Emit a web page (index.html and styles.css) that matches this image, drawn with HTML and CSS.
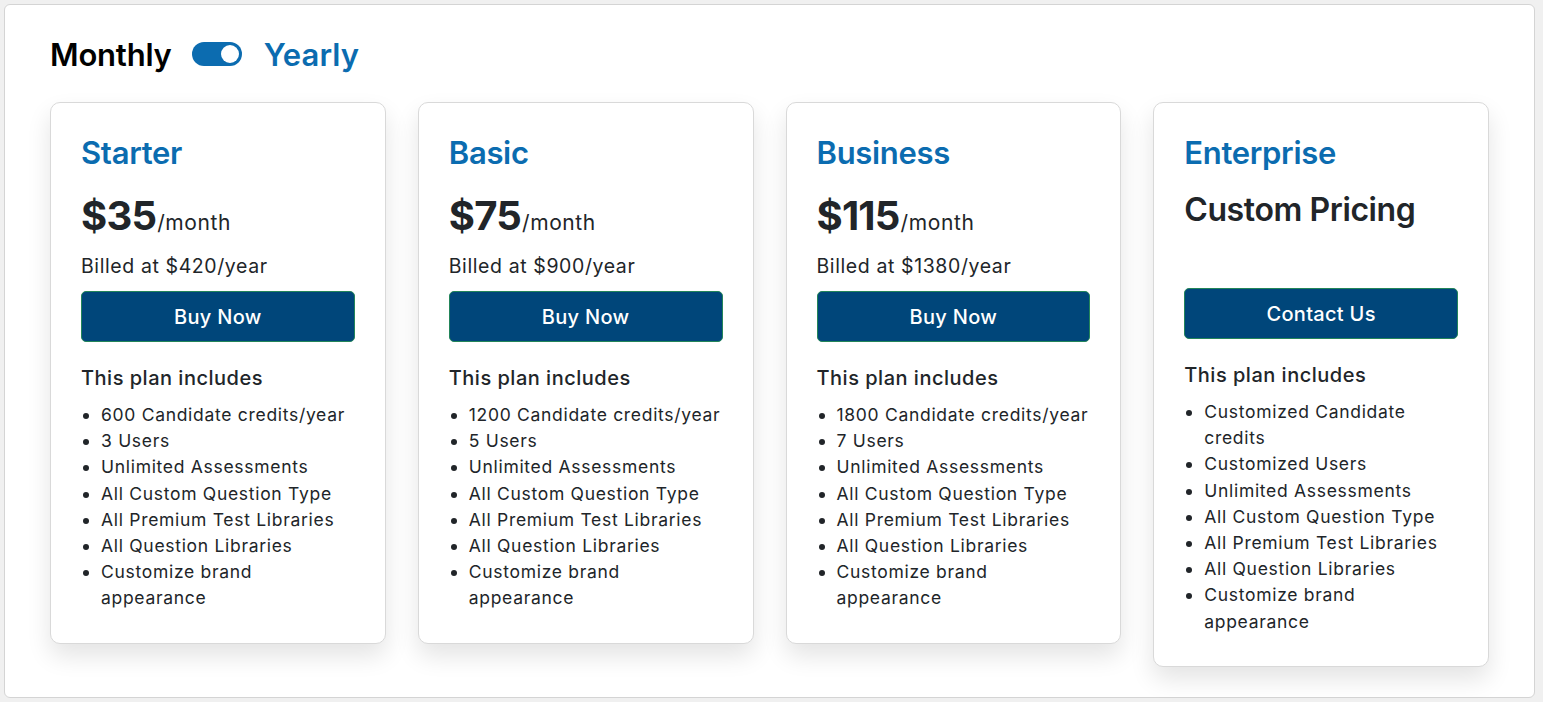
FILE: index.html
```html
<!DOCTYPE html>
<html lang="en">
<head>
<meta charset="utf-8">
<title>Pricing</title>
<link rel="stylesheet" href="styles.css">
</head>
<body>
<div class="page">
  <section class="panel">
    <div class="billing-toggle">
      <span class="toggle-label">Monthly</span>
      <span class="switch"><span class="knob"></span></span>
      <span class="toggle-label active">Yearly</span>
    </div>
    <div class="plans">
      <article class="plan">
        <h2 class="plan-name">Starter</h2>
        <div class="price"><span class="amount">$35</span><span class="per">/month</span></div>
        <p class="billed">Billed at $420/year</p>
        <button class="cta">Buy Now</button>
        <h3 class="includes">This plan includes</h3>
        <ul class="features">
          <li>600 Candidate credits/year</li>
          <li>3 Users</li>
          <li>Unlimited Assessments</li>
          <li>All Custom Question Type</li>
          <li>All Premium Test Libraries</li>
          <li>All Question Libraries</li>
          <li>Customize brand appearance</li>
        </ul>
      </article>
      <article class="plan">
        <h2 class="plan-name">Basic</h2>
        <div class="price"><span class="amount">$75</span><span class="per">/month</span></div>
        <p class="billed">Billed at $900/year</p>
        <button class="cta">Buy Now</button>
        <h3 class="includes">This plan includes</h3>
        <ul class="features">
          <li>1200 Candidate credits/year</li>
          <li>5 Users</li>
          <li>Unlimited Assessments</li>
          <li>All Custom Question Type</li>
          <li>All Premium Test Libraries</li>
          <li>All Question Libraries</li>
          <li>Customize brand appearance</li>
        </ul>
      </article>
      <article class="plan">
        <h2 class="plan-name">Business</h2>
        <div class="price"><span class="amount">$115</span><span class="per">/month</span></div>
        <p class="billed">Billed at $1380/year</p>
        <button class="cta">Buy Now</button>
        <h3 class="includes">This plan includes</h3>
        <ul class="features">
          <li>1800 Candidate credits/year</li>
          <li>7 Users</li>
          <li>Unlimited Assessments</li>
          <li>All Custom Question Type</li>
          <li>All Premium Test Libraries</li>
          <li>All Question Libraries</li>
          <li>Customize brand appearance</li>
        </ul>
      </article>
      <article class="plan">
        <h2 class="plan-name">Enterprise</h2>
        <div class="custom-price">Custom Pricing</div>
        <button class="cta">Contact Us</button>
        <h3 class="includes">This plan includes</h3>
        <ul class="features">
          <li>Customized Candidate credits</li>
          <li>Customized Users</li>
          <li>Unlimited Assessments</li>
          <li>All Custom Question Type</li>
          <li>All Premium Test Libraries</li>
          <li>All Question Libraries</li>
          <li>Customize brand appearance</li>
        </ul>
      </article>
    </div>
  </section>
</div>
</body>
</html>
```

FILE: styles.css
```css
* { box-sizing: border-box; }

html, body {
  margin: 0;
  background: #f0f0f0;
}

body {
  font-family: "Inter", "Open Sans", sans-serif;
  color: #212529;
}

.page {
  padding: 4px 8px 5px 4px;
}

.panel {
  background: #ffffff;
  border: 1px solid #d4d4d4;
  border-radius: 6px;
  padding: 33px 45px 30px 45px;
}

.billing-toggle {
  display: flex;
  align-items: center;
  height: 32px;
}

.toggle-label {
  font-size: 31px;
  font-weight: 600;
  letter-spacing: -0.2px;
  color: #000000;
}

.toggle-label.active {
  color: #0b6cb0;
  letter-spacing: 0.1px;
}

.switch {
  width: 50px;
  height: 24px;
  border-radius: 12px;
  background: #0c6cb0;
  margin: 0 22px 0 20px;
  display: flex;
  align-items: center;
  justify-content: flex-end;
  padding-right: 3px;
}

.knob {
  width: 18px;
  height: 18px;
  border-radius: 50%;
  background: #ffffff;
}

.plans {
  display: grid;
  grid-template-columns: repeat(4, 335.75px);
  column-gap: 32px;
  align-items: start;
  margin-top: 32px;
}

.plan {
  background: #ffffff;
  border: 1px solid #d9d9d9;
  border-radius: 10px;
  box-shadow: 0 12px 24px rgba(0, 0, 0, 0.11);
  padding: 32px 30px 31px 30px;
}

.plan-name {
  margin: 0;
  font-size: 31px;
  line-height: 35px;
  font-weight: 600;
  letter-spacing: -0.3px;
  color: #0b6cb0;
}

.price {
  margin-top: 23px;
  height: 46px;
  display: flex;
  align-items: baseline;
}

.amount {
  font-size: 40px;
  font-weight: 700;
  letter-spacing: -0.8px;
  line-height: 46px;
}

.per {
  font-size: 21px;
  letter-spacing: 0.6px;
  margin-left: 1px;
}

.billed {
  margin: 13px 0 0 0;
  font-size: 19.5px;
  letter-spacing: 0.6px;
  line-height: 28px;
}

.custom-price {
  margin-top: 21px;
  margin-bottom: 59px;
  font-size: 32px;
  line-height: 38px;
  font-weight: 600;
  letter-spacing: -0.4px;
  color: #212529;
}

.cta {
  display: block;
  width: 100%;
  height: 51px;
  margin-top: 11px;
  background: #00467a;
  border: 1px solid #23855a;
  border-radius: 5px;
  color: #ffffff;
  font-family: inherit;
  font-size: 20px;
  letter-spacing: 0.3px;
  font-weight: 500;
}

.custom-price + .cta {
  margin-top: 0;
}

.includes {
  margin: 22px 0 0 0;
  font-size: 20px;
  letter-spacing: 0.5px;
  line-height: 28px;
  font-weight: 500;
}

.features {
  margin: 10px 0 0 0;
  padding-left: 20px;
  font-size: 17.5px;
  letter-spacing: 0.7px;
  line-height: 26.2px;
}
```
